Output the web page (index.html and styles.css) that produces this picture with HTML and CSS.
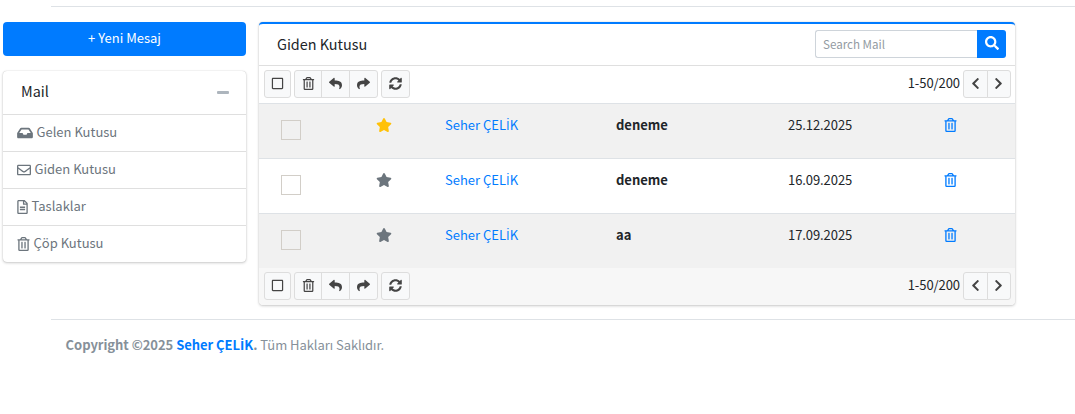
FILE: index.html
```
<!DOCTYPE html>
<html lang="tr">
<head>
<meta charset="utf-8">
<title>Giden Kutusu</title>
<link rel="stylesheet" href="styles.css">
</head>
<body>
<svg class="sprite" aria-hidden="true">
<symbol id="star" viewBox="0 0 576 512"><path d="M259.3 17.8L194 150.2 47.9 171.5c-26.2 3.8-36.7 36.1-17.7 54.6l105.7 103-25 145.5c-4.5 26.3 23.2 46 46.4 33.7L288 439.6l130.7 68.7c23.2 12.2 50.9-7.4 46.4-33.7l-25-145.5 105.7-103c19-18.5 8.5-50.8-17.7-54.6L382 150.2 316.7 17.8c-11.7-23.6-45.6-23.9-57.4 0z"/></symbol>
<symbol id="trash" viewBox="0 0 448 512"><path d="M268 416h24a12 12 0 0 0 12-12V188a12 12 0 0 0-12-12h-24a12 12 0 0 0-12 12v216a12 12 0 0 0 12 12zM432 80h-82.41l-34-56.7A48 48 0 0 0 274.41 0H173.59a48 48 0 0 0-41.16 23.3L98.41 80H16A16 16 0 0 0 0 96v16a16 16 0 0 0 16 16h16v336a48 48 0 0 0 48 48h288a48 48 0 0 0 48-48V128h16a16 16 0 0 0 16-16V96a16 16 0 0 0-16-16zM171.84 50.91A6 6 0 0 1 177 48h94a6 6 0 0 1 5.15 2.91L293.61 80H154.39zM368 464H80V128h288zm-212-48h24a12 12 0 0 0 12-12V188a12 12 0 0 0-12-12h-24a12 12 0 0 0-12 12v216a12 12 0 0 0 12 12z"/></symbol>
<symbol id="square" viewBox="0 0 448 512"><path d="M400 32H48C21.5 32 0 53.5 0 80v352c0 26.5 21.5 48 48 48h352c26.5 0 48-21.5 48-48V80c0-26.5-21.5-48-48-48zm-6 400H54c-3.3 0-6-2.7-6-6V86c0-3.3 2.7-6 6-6h340c3.3 0 6 2.7 6 6v340c0 3.3-2.7 6-6 6z"/></symbol>
<symbol id="reply" viewBox="0 0 512 512"><path d="M8.309 189.836L184.313 37.851C199.719 24.546 224 35.347 224 56.015v80.053c160.629 1.839 288 34.032 288 186.258 0 61.441-39.581 122.309-83.333 154.132-13.653 9.931-33.111-2.533-28.077-18.631 45.344-145.012-21.507-183.51-176.59-185.742V360c0 20.7-24.3 31.453-39.687 18.164l-176.004-152c-11.071-9.562-11.086-26.753 0-36.328z"/></symbol>
<symbol id="share" viewBox="0 0 512 512"><path transform="matrix(-1 0 0 1 512 0)" d="M8.309 189.836L184.313 37.851C199.719 24.546 224 35.347 224 56.015v80.053c160.629 1.839 288 34.032 288 186.258 0 61.441-39.581 122.309-83.333 154.132-13.653 9.931-33.111-2.533-28.077-18.631 45.344-145.012-21.507-183.51-176.59-185.742V360c0 20.7-24.3 31.453-39.687 18.164l-176.004-152c-11.071-9.562-11.086-26.753 0-36.328z"/></symbol>
<symbol id="sync" viewBox="0 0 512 512"><path d="M370.72 133.28C339.458 104.008 298.888 87.962 255.848 88c-77.458.068-144.328 53.178-162.791 126.85-1.344 5.363-6.122 9.15-11.651 9.15H24.103c-7.498 0-13.194-6.807-11.807-14.176C33.933 94.924 134.813 8 256 8c66.448 0 126.791 26.136 171.315 68.685L463.03 40.97C478.149 25.851 504 36.559 504 57.941V192c0 13.255-10.745 24-24 24H345.941c-21.382 0-32.09-25.851-16.971-40.971l41.75-41.749zM32 296h134.059c21.382 0 32.09 25.851 16.971 40.971l-41.75 41.75c31.262 29.273 71.835 45.319 114.876 45.28 77.418-.07 144.315-53.144 162.787-126.849 1.344-5.363 6.122-9.15 11.651-9.15h57.304c7.498 0 13.194 6.807 11.807 14.176C478.067 417.076 377.187 504 256 504c-66.448 0-126.791-26.136-171.315-68.685L48.97 471.03C33.851 486.149 8 475.441 8 454.059V320c0-13.255 10.745-24 24-24z"/></symbol>
<symbol id="search" viewBox="0 0 512 512"><path d="M505 442.7L405.3 343c-4.5-4.5-10.6-7-17-7H372c27.6-35.3 44-79.7 44-128C416 93.1 322.9 0 208 0S0 93.1 0 208s93.1 208 208 208c48.3 0 92.7-16.4 128-44v16.300c0 6.400 2.500 12.500 7 17l99.700 99.700c9.400 9.400 24.600 9.400 33.900 0l28.300-28.300c9.400-9.400 9.400-24.600.1-34zM208 336c-70.700 0-128-57.200-128-128 0-70.700 57.200-128 128-128 70.700 0 128 57.200 128 128 0 70.700-57.200 128-128 128z"/></symbol>
<symbol id="left" viewBox="0 0 320 512"><path d="M34.520 239.030L228.870 44.690c9.370-9.370 24.570-9.370 33.940 0l22.670 22.670c9.360 9.360 9.370 24.520.04 33.900L131.490 256l154.020 154.750c9.340 9.380 9.320 24.540-.04 33.900l-22.670 22.670c-9.370 9.370-24.570 9.370-33.940 0L34.520 272.970c-9.370-9.370-9.370-24.570 0-33.940z"/></symbol>
<symbol id="right" viewBox="0 0 320 512"><path transform="matrix(-1 0 0 1 320 0)" d="M34.520 239.030L228.870 44.690c9.370-9.370 24.570-9.370 33.940 0l22.670 22.670c9.360 9.360 9.370 24.520.04 33.900L131.490 256l154.020 154.750c9.340 9.380 9.320 24.540-.04 33.900l-22.670 22.670c-9.370 9.370-24.570 9.370-33.940 0L34.520 272.970c-9.370-9.370-9.370-24.570 0-33.940z"/></symbol>
<symbol id="inbox" viewBox="0 0 576 512"><path d="M567.938 243.908L462.25 85.374A48.003 48.003 0 0 0 422.311 64H153.689a48 48 0 0 0-39.938 21.374L8.062 243.908A47.994 47.994 0 0 0 0 270.533V400c0 26.510 21.490 48 48 48h480c26.510 0 48-21.490 48-48V270.533a47.994 47.994 0 0 0-8.062-26.625zM162.252 128h251.497l85.333 128H376l-32 64H232l-32-64H76.918l85.334-128z"/></symbol>
<symbol id="envelope" viewBox="0 0 512 512"><path d="M464 64H48C21.490 64 0 85.490 0 112v288c0 26.510 21.490 48 48 48h416c26.510 0 48-21.490 48-48V112c0-26.510-21.490-48-48-48zm0 48v40.805c-22.422 18.259-58.168 46.651-134.587 106.490-16.841 13.247-50.201 45.072-73.413 44.701-23.208.375-56.579-31.459-73.413-44.701C106.180 199.465 70.425 171.067 48 152.805V112h416zM48 400V214.398c22.914 18.251 55.409 43.862 104.938 82.646 21.857 17.205 60.134 55.186 103.062 54.955 42.717.231 80.509-37.199 103.053-54.947 49.528-38.783 82.032-64.401 104.947-82.653V400H48z"/></symbol>
<symbol id="file" viewBox="0 0 384 512"><path d="M288 248v28c0 6.600-5.400 12-12 12H108c-6.600 0-12-5.400-12-12v-28c0-6.600 5.400-12 12-12h168c6.600 0 12 5.400 12 12zm-12 72H108c-6.600 0-12 5.400-12 12v28c0 6.600 5.400 12 12 12h168c6.600 0 12-5.400 12-12v-28c0-6.600-5.400-12-12-12zm108-188.100V464c0 26.500-21.500 48-48 48H48c-26.500 0-48-21.500-48-48V48C0 21.500 21.500 0 48 0h204.100C264.800 0 277 5.100 286 14.100L369.900 98c9 8.900 14.100 21.200 14.100 33.900zm-128-80V128h76.100L256 51.900zM336 464V176H232c-13.300 0-24-10.700-24-24V48H48v416h288z"/></symbol>
</svg>

<div class="rule"></div>
<main class="content">
  <aside class="side">
    <a class="compose">+ Yeni Mesaj</a>
    <section class="card folders">
      <header class="folders-head"><h3>Mail</h3><span class="minus"></span></header>
      <a class="folder"><svg class="i w18"><use href="#inbox"/></svg>Gelen Kutusu</a>
      <a class="folder"><svg class="i w16"><use href="#envelope"/></svg>Giden Kutusu</a>
      <a class="folder"><svg class="i w12"><use href="#file"/></svg>Taslaklar</a>
      <a class="folder"><svg class="i w14"><use href="#trash"/></svg>Çöp Kutusu</a>
    </section>
  </aside>

  <section class="card mailbox">
    <header class="mail-head">
      <h3>Giden Kutusu</h3>
      <div class="search"><input type="text" placeholder="Search Mail"><button><svg class="i"><use href="#search"/></svg></button></div>
    </header>
    <div class="toolbar">
      <button class="btn check"><svg class="i"><use href="#square"/></svg></button>
      <div class="group"><button class="btn del"><svg class="i"><use href="#trash"/></svg></button><button class="btn"><svg class="i"><use href="#reply"/></svg></button><button class="btn"><svg class="i"><use href="#share"/></svg></button></div>
      <button class="btn"><svg class="i"><use href="#sync"/></svg></button>
      <span class="count">1-50/200</span>
      <div class="group pager"><button class="btn"><svg class="i"><use href="#left"/></svg></button><button class="btn"><svg class="i"><use href="#right"/></svg></button></div>
    </div>
    <div class="row odd"><span class="box"></span><svg class="i star gold"><use href="#star"/></svg><a>Seher ÇEL<span class="dotted">İ</span>K</a><b>deneme</b><span class="date">25.12.2025</span><svg class="i remove"><use href="#trash"/></svg></div>
    <div class="row"><span class="box"></span><svg class="i star"><use href="#star"/></svg><a>Seher ÇEL<span class="dotted">İ</span>K</a><b>deneme</b><span class="date">16.09.2025</span><svg class="i remove"><use href="#trash"/></svg></div>
    <div class="row odd"><span class="box"></span><svg class="i star"><use href="#star"/></svg><a>Seher ÇEL<span class="dotted">İ</span>K</a><b>aa</b><span class="date">17.09.2025</span><svg class="i remove"><use href="#trash"/></svg></div>
    <div class="toolbar bottom">
      <button class="btn check"><svg class="i"><use href="#square"/></svg></button>
      <div class="group"><button class="btn del"><svg class="i"><use href="#trash"/></svg></button><button class="btn"><svg class="i"><use href="#reply"/></svg></button><button class="btn"><svg class="i"><use href="#share"/></svg></button></div>
      <button class="btn"><svg class="i"><use href="#sync"/></svg></button>
      <span class="count">1-50/200</span>
      <div class="group pager"><button class="btn"><svg class="i"><use href="#left"/></svg></button><button class="btn"><svg class="i"><use href="#right"/></svg></button></div>
    </div>
  </section>
</main>
<footer class="footer"><b>Copyright ©2025 <a>Seher ÇEL<span class="dotted">İ</span>K</a>.</b> Tüm Hakları Saklıdır.</footer>
</body>
</html>
```
FILE: styles.css
```
* { box-sizing: border-box; }
body {
  margin: 0;
  padding-top: 6px;
  background: #fff;
  color: #212529;
  font: 13px/20px "Source Sans Pro", "Noto Sans CJK JP", "Noto Sans", sans-serif;
}
.sprite { display: none; }
.i { width: 14px; height: 14px; flex: none; fill: currentColor; display: block; }
h3 { margin: 0; font-weight: 400; }
a { color: #007bff; text-decoration: none; }
button, input { font: inherit; margin: 0; }
/* the main face has no dotted capital I */
.dotted { font-family: "Open Sans", sans-serif; line-height: 1; }
.rule { height: 1px; margin-left: 51px; background: #dee2e6; }

.content { display: flex; align-items: flex-start; gap: 13px; padding: 15px 0 0 3px; }
.side { width: 243px; display: flex; flex-direction: column; gap: 15px; }
.compose {
  height: 34px;
  border-radius: 4px;
  background: #007bff;
  color: #fff;
  line-height: 31px;
  text-align: center;
}
.card {
  border-radius: 4px;
  background: #fff;
  box-shadow: 0 0 1px rgba(0, 0, 0, .25), 0 1px 3px rgba(0, 0, 0, .2);
}
.folders-head {
  height: 43px;
  padding: 0 17px 0 18px;
  display: flex;
  align-items: center;
  justify-content: space-between;
}
.folders-head h3, .mail-head h3 { font-size: 14.4px; }
.folders-head h3 { padding-bottom: 4px; }
.mail-head h3 { padding-bottom: 2px; }
.minus { width: 12px; height: 3px; border-radius: 1px; background: #adb5bd; }
.folder {
  height: 37px;
  padding: 0 14px 3px;
  border-top: 1px solid #dfdfdf;
  display: flex;
  align-items: center;
  gap: 3.5px;
  color: #6c757d;
}
.folder .i { margin-top: 2px; }
.w18 { width: 16px; }
.w16 { width: 14px; }
.w12 { width: 11px; }
.w14 { width: 13px; }

.mailbox { width: 756px; border-top: 2px solid #007bff; }
.mail-head {
  height: 42px;
  padding: 0 9px 0 18px;
  border-bottom: 1px solid #dfdfdf;
  display: flex;
  align-items: center;
  justify-content: space-between;
}
.search { display: flex; height: 28px; margin-bottom: 1px; }
.search input {
  width: 162px;
  padding: 0 7px;
  border: 1px solid #ced4da;
  border-right: 0;
  border-radius: 3px 0 0 3px;
  font-size: 11.6px;
}
.search input::placeholder { color: #939ba2; }
.search button {
  width: 29px;
  padding: 0 0 2px;
  border: 0;
  border-radius: 0 3px 3px 0;
  background: #007bff;
  color: #fff;
  display: flex;
  align-items: center;
  justify-content: center;
}

.toolbar { height: 37px; padding: 4px 4px 0 5px; display: flex; align-items: flex-start; gap: 3px; }
.bottom { background: #f7f7f7; border-radius: 0 0 4px 4px; }
.btn {
  width: 29px;
  height: 28px;
  padding: 0 0 1px;
  border: 1px solid #ddd;
  border-radius: 3px;
  background: #f8f9fa;
  color: #444;
  display: flex;
  align-items: center;
  justify-content: center;
}
.btn .i { width: 13px; height: 13px; }
.check { width: 27px; }
.group { display: flex; }
.group .btn + .btn { margin-left: -1px; border-top-left-radius: 0; border-bottom-left-radius: 0; }
.group .btn:not(:last-child) { border-top-right-radius: 0; border-bottom-right-radius: 0; }
.group .del { width: 28px; }
.pager .btn { width: 24.5px; }
.count { margin-left: auto; line-height: 26px; letter-spacing: -.08px; }

.row {
  height: 55px;
  padding: 11px 0 0 22px;
  border-top: 1px solid #dee2e6;
  display: grid;
  grid-template-columns: 95px 69px 171px 172px 156px 1fr;
  align-items: start;
}
.odd { background: #f1f1f1; }
.box { width: 20px; height: 20px; margin-top: 5px; border: 1px solid #d2cec8; }
.star { width: 16px; margin-top: 3px; color: #6c757d; }
.gold { color: #ffc107; }
.date { letter-spacing: -.08px; }
.remove { width: 13px; margin-top: 3px; color: #007bff; }

.footer {
  margin: 14px 0 0 51px;
  padding: 15px 14.6px;
  border-top: 1px solid #dee2e6;
  color: #869099;
  letter-spacing: -.04px;
}
```
